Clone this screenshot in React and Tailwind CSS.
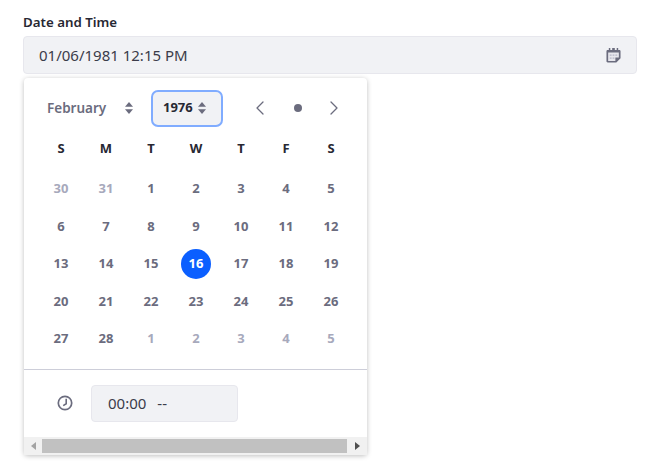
import { ChevronLeft, ChevronRight } from 'lucide-react'

const WEEKDAYS = ['S', 'M', 'T', 'W', 'T', 'F', 'S']

// muted days belong to the previous and next month
const WEEKS = [
  [['30', 1], ['31', 1], ['1'], ['2'], ['3'], ['4'], ['5']],
  [['6'], ['7'], ['8'], ['9'], ['10'], ['11'], ['12']],
  [['13'], ['14'], ['15'], ['16', 2], ['17'], ['18'], ['19']],
  [['20'], ['21'], ['22'], ['23'], ['24'], ['25'], ['26']],
  [['27'], ['28'], ['1', 1], ['2', 1], ['3', 1], ['4', 1], ['5', 1]],
]

function SortIcon({ className }) {
  return (
    <svg width="8" height="12" viewBox="0 0 8 12" className={className} fill="currentColor">
      <path d="M4 0 8 4.8H0z" />
      <path d="M4 12 0 7.2h8z" />
    </svg>
  )
}

function CalendarIcon() {
  return (
    <svg width="15" height="15" viewBox="0 0 16 16" className="text-[#6b6c7e]">
      <path fill="currentColor" d="M3 0h1.600v2h2V0h2.800v2h2V0H13v2h1.200c.7 0 1.300.6 1.300 1.300V11l-4.500 4.500H1.800c-.7 0-1.300-.6-1.300-1.300V3.300C.5 2.600 1.100 2 1.800 2H3z" />
      <path fill="#e7e7ed" d="M2.300 4.800h11.400v5.400H10v3.600H2.300z" />
      <path fill="#b5b6c6" d="M4 6.800h2v1.500H4zM7 6.800h2v1.500H7zM10 6.800h2v1.500h-2zM4 10h2v1.500H4zM7 10h2v1.500H7z" />
    </svg>
  )
}

function ClockIcon() {
  return (
    <svg width="16" height="16" viewBox="0 0 16 16" fill="none" stroke="#6b6c7e">
      <circle cx="8" cy="8" r="6.700" strokeWidth="1.700" />
      <path d="M9.200 3.800v5L6.200 10.600" strokeWidth="1.600" />
    </svg>
  )
}

function DayCell({ day, kind }) {
  if (kind === 2) {
    return (
      <div className="flex justify-center">
        <span className="w-[30px] h-[30px] rounded-full bg-[#0b5fff] text-white flex items-center justify-center">{day}</span>
      </div>
    )
  }
  return <div className={`text-center ${kind === 1 ? 'text-[#a7a9bc]' : 'text-[#6b6c7e]'}`}>{day}</div>
}

export default function App() {
  return (
    <div className="w-[645px] h-[464px] overflow-hidden bg-white px-[23px] pt-[13px] font-['Noto_Sans','Open_Sans',sans-serif] text-[#272833]">
      <label className="block text-[13.300px] leading-[18px] font-semibold mb-[5px]">Date and Time</label>

      <div className="w-[614px] h-[38px] bg-[#f1f2f5] border border-[#e7e7ed] rounded flex items-center justify-between pl-[15px] pr-[15px]">
        <span className="text-[15px] text-[#3b3c4a]">01/06/1981 12:15 PM</span>
        <CalendarIcon />
      </div>

      <div className="mt-1 ml-px w-[343px] h-[377px] bg-white rounded-sm shadow-[0_1px_5px_rgba(0,0,0,0.25)] flex flex-col">
        <div className="h-[60px] flex items-center pl-[23px]">
          <span className="w-[78px] text-[13.500px] font-semibold text-[#6b6c7e]">February</span>
          <SortIcon className="text-[#6b6c7e]" />
          <div className="ml-[18px] w-[72px] h-[37px] rounded-[7px] bg-[#f1f2f5] border-2 border-[#80acff] flex items-center pl-[10px] gap-[5px] text-[13px] font-bold text-[#272833]">
            1976
            <SortIcon className="text-[#6b6c7e]" />
          </div>
          <ChevronLeft size={24} strokeWidth={1.300} className="ml-[25px] text-[#6b6c7e]" />
          <span className="ml-[22px] w-[8px] h-[8px] rounded-full bg-[#6b6c7e]" />
          <ChevronRight size={24} strokeWidth={1.300} className="ml-[20px] text-[#6b6c7e]" />
        </div>

        <div className="px-[14.500px] grid grid-cols-[repeat(7,45px)] text-[13px] font-bold">
          {WEEKDAYS.map((d, i) => (
            <div key={i} className="h-[21px] leading-[21px] text-center text-[#272833]">{d}</div>
          ))}
        </div>

        <div className="mt-[11px] px-[14.500px] text-[13px] font-bold flex flex-col">
          {WEEKS.map((week, i) => (
            <div key={i} className="grid grid-cols-[repeat(7,45px)] h-[37.500px] items-center">
              {week.map(([day, kind], j) => (
                <DayCell key={j} day={day} kind={kind} />
              ))}
            </div>
          ))}
        </div>

        <div className="mt-[11px] border-t border-[#cdced9] flex-1 flex items-center pl-[33px]">
          <ClockIcon />
          <div className="ml-[18px] w-[147px] h-[37px] bg-[#f1f2f5] border border-[#e7e7ed] rounded flex items-center pl-4 text-[15px] text-[#3b3c4a]">
            00:00<span className="ml-[11px]">--</span>
          </div>
        </div>

        <div className="h-[18px] bg-[#f1f1f1] flex items-center">
          <div className="w-[18px] flex justify-center">
            <span className="border-y-[4px] border-r-[5px] border-y-transparent border-r-[#a3a3a3]" />
          </div>
          <div className="w-[305px] h-[14px] bg-[#c1c1c1]" />
          <div className="flex-1 flex justify-center">
            <span className="border-y-[4px] border-l-[5px] border-y-transparent border-l-[#505050]" />
          </div>
        </div>
      </div>
    </div>
  )
}
